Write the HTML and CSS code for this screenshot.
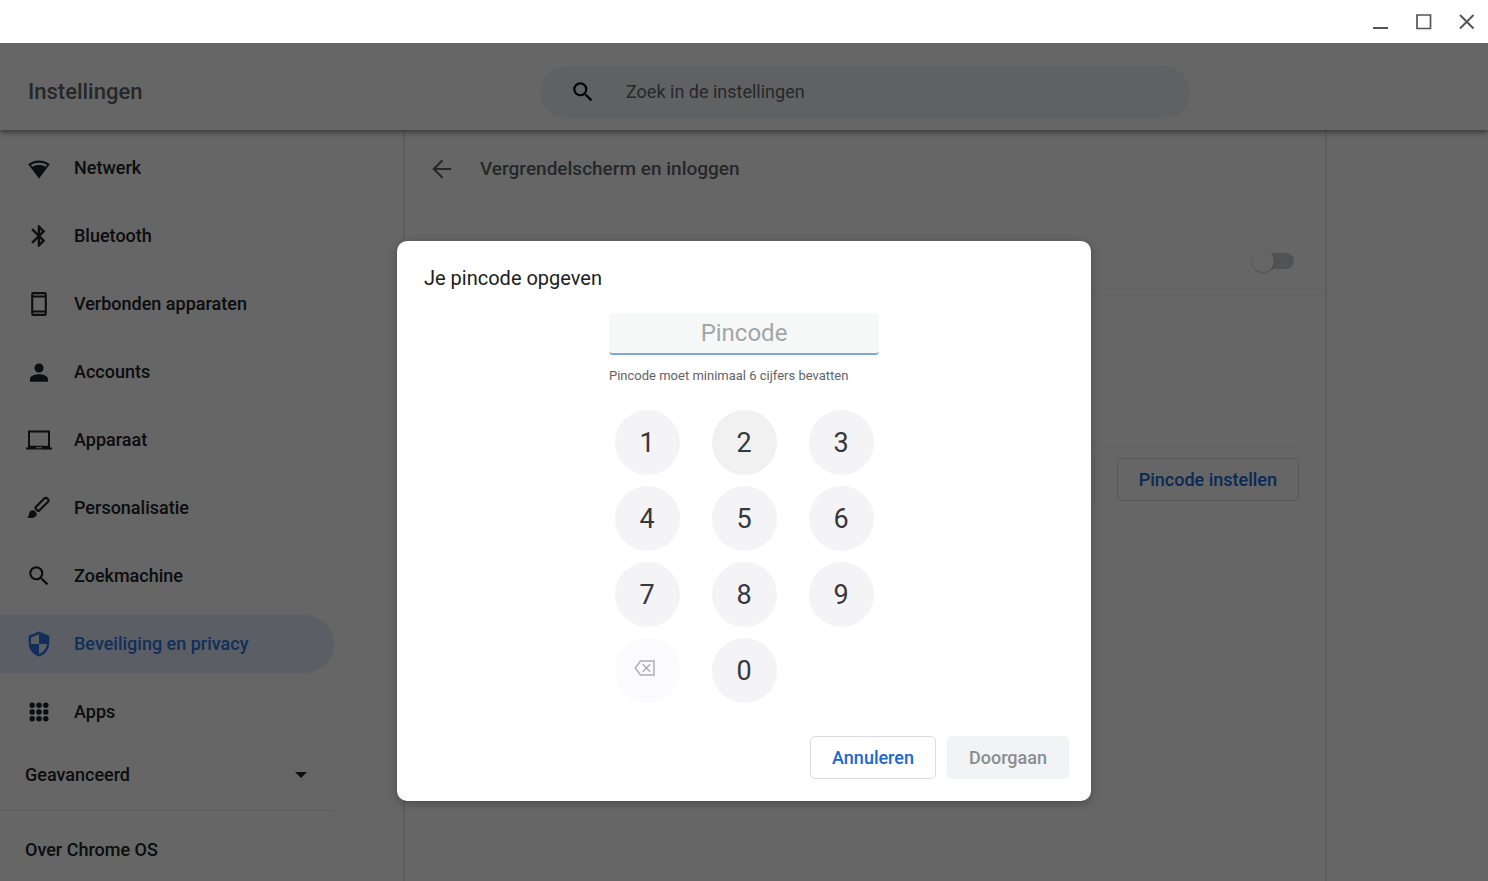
FILE: index.html
```html
<!DOCTYPE html>
<html lang="nl">
<head>
    <meta charset="UTF-8">
    <meta name="viewport" content="width=device-width, initial-scale=1.0">
    <title>Instellingen</title>
    <link rel="stylesheet" href="styles.css">
</head>
<body>
    <div class="titlebar">
        <button class="window-button" aria-label="Minimaliseren">
            <svg width="16" height="16" viewBox="0 0 16 16"><path d="M0 14h15" fill="none" stroke="currentColor" stroke-width="2"/></svg>
        </button>
        <button class="window-button" aria-label="Maximaliseren">
            <svg width="16" height="16" viewBox="0 0 16 16"><path d="M1 1h13.500v13.500H1z" fill="none" stroke="currentColor" stroke-width="1.700"/></svg>
        </button>
        <button class="window-button" aria-label="Sluiten">
            <svg width="16" height="16" viewBox="0 0 16 16"><path d="M1 1l13.500 13.500M14.500 1L1 14.500" fill="none" stroke="currentColor" stroke-width="2"/></svg>
        </button>
    </div>

    <div class="window">
        <header class="header">
            <h1 class="header-title">Instellingen</h1>
            <div class="search">
                <svg class="icon" viewBox="0 0 24 24"><path d="M15.500 14h-.79l-.28-.27A6.471 6.471 0 0 0 16 9.500 6.500 6.500 0 1 0 9.500 16c1.610 0 3.090-.59 4.230-1.570l.27.28v.79l5 4.990L20.490 19l-4.990-5zm-6 0C7.010 14 5 11.990 5 9.500S7.010 5 9.500 5 14 7.010 14 9.500 11.990 14 9.500 14z"/></svg>
                <input class="search-input" type="text" placeholder="Zoek in de instellingen" aria-label="Zoek in de instellingen">
            </div>
        </header>

        <div class="body">
            <nav class="sidebar">
                <a class="nav-item" href="#">
                    <svg class="icon" viewBox="0 0 26 26"><path fill-rule="evenodd" d="M13 5.500C8.800 5.500 5 7 2.200 9.300L13 23.500 23.800 9.300C21 7 17.200 5.500 13 5.500zm0 2.200c3 0 5.800.9 8.100 2.300l-1.300 1.800C17.800 10.600 15.500 10 13 10s-4.800.6-6.800 1.800L4.900 10C7.200 8.600 10 7.700 13 7.700z"/></svg>
                    Netwerk
                </a>
                <a class="nav-item" href="#">
                    <svg class="icon" viewBox="0 0 24 24"><path d="M17.710 7.710L12 2h-1v7.590L6.410 5 5 6.410 10.590 12 5 17.590 6.410 19 11 14.410V22h1l5.710-5.710-4.300-4.290 4.300-4.290zM13 5.830l1.880 1.880L13 9.590V5.830zm1.880 10.460L13 18.170v-3.760l1.880 1.880z" stroke="currentColor" stroke-width=".3"/></svg>
                    Bluetooth
                </a>
                <a class="nav-item" href="#">
                    <svg class="icon" viewBox="0 0 24 24"><path fill-rule="evenodd" d="M6.500 1h11A1.700 1.700 0 0 1 19.200 2.700v18.600a1.700 1.700 0 0 1-1.700 1.700h-11a1.700 1.700 0 0 1-1.700-1.700V2.700A1.700 1.700 0 0 1 6.500 1zm.2 1.900v1.200h10.600V2.900zm0 3v12.200h10.600V5.900zm0 14v1.200h10.600v-1.200z"/></svg>
                    Verbonden apparaten
                </a>
                <a class="nav-item" href="#">
                    <svg class="icon" viewBox="0 0 24 24"><path d="M12 12.500a4.200 4.200 0 1 0 0-8.400 4.200 4.200 0 0 0 0 8.400zm0 1.500c-2.700 0-8.300 1.300-8.300 4.300V21h16.600v-2.700c0-3-5.600-4.300-8.300-4.300z"/></svg>
                    Accounts
                </a>
                <a class="nav-item" href="#">
                    <svg class="icon" viewBox="0 0 26 26"><path fill-rule="evenodd" d="M2 3.500h22v17h2v2H0v-2h2zM4 5.500v13.200h18V5.500zM10 20.300v1h6v-1z"/></svg>
                    Apparaat
                </a>
                <a class="nav-item" href="#">
                    <svg class="icon" viewBox="0 0 26 26"><path d="M9.800 12L18.300 3.500q1.500-1.500 3.300.2t.2 3.300L13.300 15.500q-1 .7-1.800 0l-1.700-1.700q-.7-.9 0-1.800z" fill="none" stroke="currentColor" stroke-width="2.200" stroke-linejoin="round"/><path d="M5.200 15.600a3.800 3.800 0 0 1 4.900 5.300C8.500 23 4 23.800.8 21.900c1.600-.4 2.200-1.400 2.300-3 .1-1.500.8-2.600 2.100-3.300z"/></svg>
                    Personalisatie
                </a>
                <a class="nav-item" href="#">
                    <svg class="icon" viewBox="0 0 24 24"><path d="M15.500 14h-.79l-.28-.27A6.471 6.471 0 0 0 16 9.500 6.500 6.500 0 1 0 9.500 16c1.610 0 3.090-.59 4.230-1.570l.27.28v.79l5 4.990L20.490 19l-4.990-5zm-6 0C7.010 14 5 11.990 5 9.500S7.010 5 9.500 5 14 7.010 14 9.500 11.990 14 9.500 14z"/></svg>
                    Zoekmachine
                </a>
                <a class="nav-item active" href="#">
                    <svg class="icon" viewBox="0 0 24 24"><path fill-rule="evenodd" d="M12 .5L2.500 4.300v7c0 5.600 4 10.800 9.500 12.200 5.500-1.400 9.500-6.600 9.500-12.200v-7zM12 3v9h7.400c-.6 4.200-3.500 7.900-7.400 9.100V12H4.600V5.900z"/></svg>
                    Beveiliging en privacy
                </a>
                <a class="nav-item" href="#">
                    <svg class="icon" viewBox="0 0 24 24"><circle cx="5.700" cy="5.700" r="2.500"/><circle cx="12" cy="5.700" r="2.500"/><circle cx="18.300" cy="5.700" r="2.500"/><circle cx="5.700" cy="12" r="2.500"/><circle cx="12" cy="12" r="2.500"/><circle cx="18.300" cy="12" r="2.500"/><circle cx="5.700" cy="18.300" r="2.500"/><circle cx="12" cy="18.300" r="2.500"/><circle cx="18.300" cy="18.300" r="2.500"/></svg>
                    Apps
                </a>
                <button class="advanced">
                    Geavanceerd
                    <svg width="12" height="6" viewBox="0 0 12 6"><path d="M0 0h12L6 6z"/></svg>
                </button>
                <a class="about" href="#">Over Chrome OS</a>
            </nav>

            <main class="panel">
                <div class="panel-header">
                    <button class="back" aria-label="Terug">
                        <svg class="icon" viewBox="0 0 24 24"><path d="M20.500 11H6.800l6.300-6.400L11.800 3.200 3 12l8.800 8.800 1.300-1.400L6.800 13h13.700z"/></svg>
                    </button>
                    <h2 class="panel-title">Vergrendelscherm en inloggen</h2>
                </div>
                <div class="toggle-row">
                    <input class="toggle" type="checkbox" aria-label="Vergrendelscherm">
                </div>
                <div class="options"></div>
                <div class="pin-row">
                    <div class="pin-action">
                        <button class="button outline">Pincode instellen</button>
                    </div>
                </div>
            </main>
        </div>

        <div class="overlay">
            <form class="dialog" role="dialog" aria-labelledby="dialogTitle">
                <h2 class="dialog-title" id="dialogTitle">Je pincode opgeven</h2>
                <div class="pin">
                    <input class="pin-input" id="pin" type="password" placeholder="Pincode" aria-label="Pincode" aria-describedby="pinHint">
                    <p class="pin-hint" id="pinHint">Pincode moet minimaal 6 cijfers bevatten</p>
                    <div class="keypad">
                        <button type="button" class="key">1</button>
                        <button type="button" class="key hover">2</button>
                        <button type="button" class="key">3</button>
                        <button type="button" class="key">4</button>
                        <button type="button" class="key">5</button>
                        <button type="button" class="key">6</button>
                        <button type="button" class="key">7</button>
                        <button type="button" class="key">8</button>
                        <button type="button" class="key">9</button>
                        <button type="button" class="key backspace" aria-label="Wissen" disabled>
                            <svg width="22" height="16" viewBox="0 0 22 16" stroke="currentColor" stroke-width="1.500"><path d="M6.500 1H20v14H6.500L1.200 8z"/><path d="M8.800 4.300l7.400 7.400M16.200 4.300l-7.400 7.400"/></svg>
                        </button>
                        <button type="button" class="key">0</button>
                    </div>
                </div>
                <div class="dialog-actions">
                    <button type="button" class="button outline">Annuleren</button>
                    <button type="submit" class="button" disabled>Doorgaan</button>
                </div>
            </form>
        </div>
    </div>
</body>
</html>
```

FILE: styles.css
```css
* {
    box-sizing: border-box;
}

body {
    margin: 0;
    min-height: 100vh;
    display: flex;
    flex-direction: column;
    font-family: Roboto, Arial, sans-serif;
    font-size: 18px;
    line-height: 24px;
    color: #202124;
    background-color: #ffffff;
}

h1, h2, p {
    margin: 0;
}

button {
    font: inherit;
    color: inherit;
    background: none;
    border: none;
    padding: 0;
    cursor: pointer;
}

a {
    color: inherit;
    text-decoration: none;
}

svg {
    fill: currentColor;
    display: block;
}

.icon {
    width: 26px;
    height: 26px;
    flex-shrink: 0;
}

/* window bar */
.titlebar {
    height: 43px;
    display: flex;
    align-items: center;
    justify-content: flex-end;
    gap: 27px;
    padding-right: 13px;
    color: #555555;
}

.window {
    position: relative;
    flex: 1;
    display: flex;
    flex-direction: column;
    overflow: hidden;
}

/* header */
.header {
    display: grid;
    grid-template-columns: 403px minmax(0, 924px) 1fr;
    align-items: center;
    height: 87px;
    padding-top: 11px;
    box-shadow: 0 2px 6px rgba(0, 0, 0, 0.5);
    z-index: 1;
}

.header-title {
    padding-left: 28px;
    font-size: 22px;
    font-weight: 500;
    color: #5f6368;
}

.search {
    width: 650px;
    max-width: 100%;
    height: 53px;
    justify-self: center;
    display: flex;
    align-items: center;
    gap: 30px;
    padding: 0 30px;
    border-radius: 27px;
    background-color: #f1f3f4;
    color: #000000;
}

.search-input {
    flex: 1;
    min-width: 0;
    border: none;
    padding: 0;
    background: none;
    font: inherit;
}

.search-input::placeholder {
    color: #5f6368;
}

/* columns */
.body {
    flex: 1;
    display: grid;
    grid-template-columns: 403px minmax(0, 924px) 1fr;
}

.sidebar {
    display: flex;
    flex-direction: column;
    gap: 10px;
    padding: 9px 69px 0 0;
    font-weight: 500;
}

.nav-item {
    height: 58px;
    display: flex;
    align-items: center;
    gap: 22px;
    padding-left: 26px;
}

.nav-item.active {
    color: #2c76e0;
    background-color: #e4ecfa;
    border-radius: 0 29px 29px 0;
}

.advanced {
    display: flex;
    align-items: center;
    justify-content: space-between;
    height: 60px;
    padding: 0 27px 11px 25px;
    border-bottom: 1px solid #e8e8e8;
    font-weight: 500;
}

.about {
    padding: 17px 25px;
}

.panel {
    border-left: 2px solid #e8e8e8;
    border-right: 2px solid #e8e8e8;
}

.panel-header {
    display: flex;
    align-items: center;
    gap: 25px;
    height: 77px;
    padding-left: 24px;
    color: #5f6368;
}

.panel-title {
    font-size: 19px;
    font-weight: 500;
}

.toggle-row {
    display: flex;
    align-items: center;
    justify-content: flex-end;
    height: 88px;
    padding: 20px 31px 0 0;
    border-bottom: 1px solid #f3f3f3;
}

.toggle {
    appearance: none;
    position: relative;
    width: 36px;
    height: 16px;
    margin: 0;
    border-radius: 8px;
    background-color: #cbcdd0;
}

.toggle::before {
    content: "";
    position: absolute;
    left: -6px;
    top: -3px;
    width: 22px;
    height: 22px;
    border-radius: 50%;
    background-color: #ffffff;
    box-shadow: 0 1px 2px rgba(0, 0, 0, 0.25);
}

.options {
    height: 151px;
    margin-right: 26px;
    border-bottom: 1px solid #f3f3f3;
}

.pin-row {
    display: flex;
    justify-content: flex-end;
    padding: 10px 26px;
}

.pin-action {
    display: flex;
    align-items: center;
    height: 47px;
    padding-left: 22px;
    border-left: 1px solid #e8e8e8;
}

.button {
    height: 43px;
    padding: 0 21px;
    border: 1px solid transparent;
    border-radius: 5px;
    font-weight: 500;
}

.button.outline {
    color: #1a67d2;
    border-color: #dadce0;
}

.button:disabled {
    color: #8a8d90;
    background-color: #f1f3f4;
    cursor: default;
}

/* dialog */
.overlay {
    position: absolute;
    inset: 0;
    z-index: 2;
    padding-top: 198px;
    background-color: rgba(0, 0, 0, 0.6);
}

.dialog {
    width: 694px;
    max-width: 100%;
    margin: 0 auto;
    padding: 25px 22px 22px;
    border-radius: 10px;
    background-color: #ffffff;
    box-shadow: 0 2px 8px rgba(0, 0, 0, 0.3);
}

.dialog-title {
    padding-left: 5px;
    font-size: 20px;
    font-weight: 400;
}

.pin {
    width: 270px;
    margin: 23px auto 33px;
}

.pin-input {
    display: block;
    width: 100%;
    height: 42px;
    padding: 0;
    border: none;
    border-bottom: 2px solid #7da7d9;
    border-radius: 4px;
    background-color: #f6f8f8;
    font: inherit;
    font-size: 24px;
    text-align: center;
}

.pin-input:focus {
    outline: none;
}

.pin-input::placeholder {
    color: #a3a6a8;
}

.pin-hint {
    padding-top: 9px;
    font-size: 13px;
    color: #5f6368;
}

.keypad {
    display: grid;
    grid-template-columns: repeat(3, 65px);
    justify-content: center;
    gap: 11px 32px;
    margin-top: 22px;
}

.key {
    height: 65px;
    display: flex;
    align-items: center;
    justify-content: center;
    border-radius: 50%;
    background-color: #f4f4f6;
    font-size: 27px;
    color: #37383b;
}

.key.hover {
    background-color: #f1f1f2;
}

.key.backspace {
    padding: 0 4px 6px 0;
    background-color: #fbfbfd;
    color: #acaeb0;
}

.backspace svg {
    fill: none;
}

.dialog-actions {
    display: flex;
    justify-content: flex-end;
    gap: 11px;
}
```
